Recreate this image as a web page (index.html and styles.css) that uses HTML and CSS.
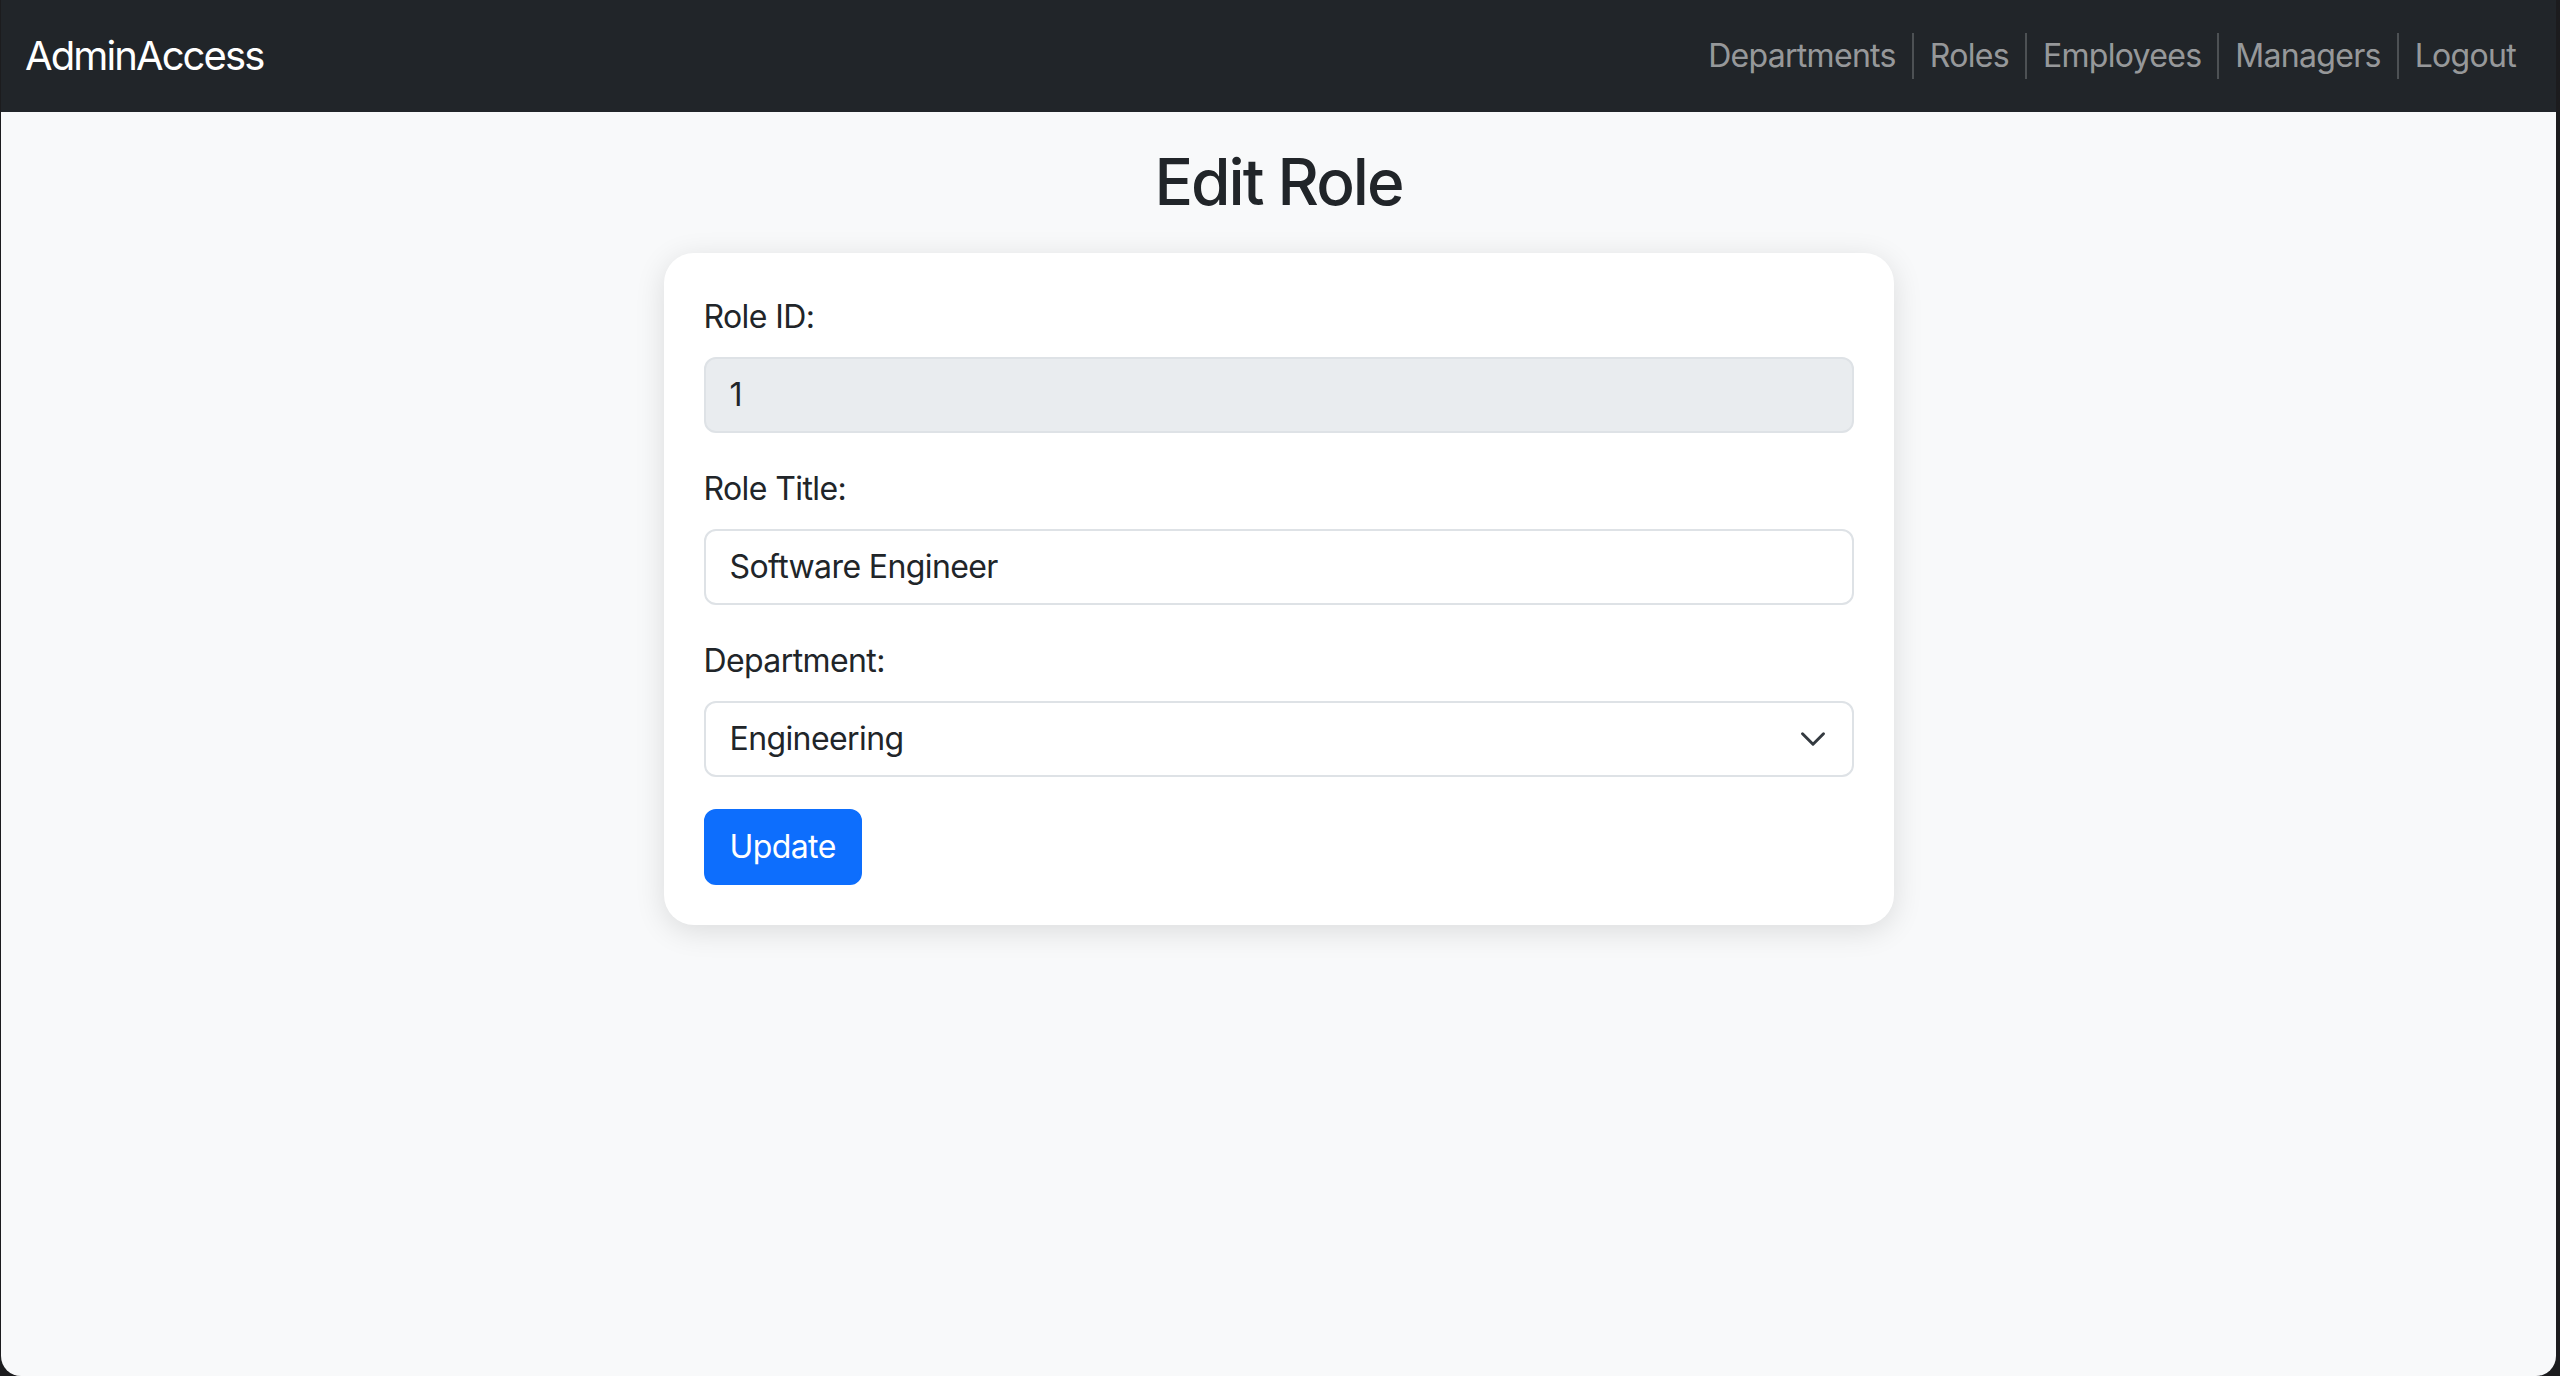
FILE: index.html
```html
<!DOCTYPE html>
<html lang="en">
<head>
<meta charset="utf-8">
<title>Edit Role</title>
<link rel="stylesheet" href="styles.css">
</head>
<body>
<div class="window">
  <nav class="navbar">
    <a class="brand" href="#">AdminAccess</a>
    <ul class="nav">
      <li><a class="nav-link" href="#">Departments</a></li>
      <li><a class="nav-link" href="#">Roles</a></li>
      <li><a class="nav-link" href="#">Employees</a></li>
      <li><a class="nav-link" href="#">Managers</a></li>
      <li><a class="nav-link" href="#">Logout</a></li>
    </ul>
  </nav>
  <main class="main">
    <h2 class="title">Edit Role</h2>
    <form class="card">
      <div class="group">
        <label class="label" for="rid">Role ID:</label>
        <input class="control" id="rid" type="text" value="1" disabled>
      </div>
      <div class="group">
        <label class="label" for="rtitle">Role Title:</label>
        <input class="control" id="rtitle" type="text" value="Software Engineer">
      </div>
      <div class="group">
        <label class="label" for="dept">Department:</label>
        <div class="select-wrap">
          <select class="control select" id="dept">
            <option>Engineering</option>
          </select>
          <svg class="chevron" viewBox="0 0 16 16" width="28" height="28" aria-hidden="true"><path d="m2 5 6 6 6-6" fill="none" stroke="#343a40" stroke-width="1.7" stroke-linecap="round" stroke-linejoin="round"/></svg>
        </div>
      </div>
      <button class="btn" type="button">Update</button>
    </form>
  </main>
</div>
</body>
</html>
```

FILE: styles.css
```css
html, body {
  margin: 0;
  padding: 0;
}
body {
  background: #1c1c1e;
  font-family: Inter, "Noto Sans", "Liberation Sans", sans-serif;
  color: #212529;
  height: 1376px;
  overflow: hidden;
}
.window {
  margin-left: 1px;
  width: 2555px;
  height: 1376px;
  background: #f8f9fa;
  border-radius: 0 0 20px 20px;
  overflow: hidden;
}
.navbar {
  height: 112px;
  background: #212529;
  display: flex;
  align-items: center;
  justify-content: space-between;
  padding: 0 24px;
  box-sizing: border-box;
}
.brand {
  color: #fff;
  font-size: 40px;
  line-height: 1.5;
  letter-spacing: -1.9px;
  text-decoration: none;
}
.nav {
  list-style: none;
  margin: 0;
  padding: 0;
  display: flex;
  align-items: center;
}
.nav li {
  display: flex;
  align-items: center;
}
.nav li + li {
  border-left: 2px solid #4d5154;
  height: 46px;
}
.nav-link {
  color: rgba(255, 255, 255, 0.55);
  font-size: 32px;
  line-height: 48px;
  letter-spacing: -0.7px;
  padding: 0 16px;
  text-decoration: none;
}
.main {
  padding-top: 32px;
}
.title {
  margin: 0 0 32px;
  text-align: center;
  font-size: 64px;
  font-weight: 500;
  line-height: 1.2;
  letter-spacing: -2px;
}
.card {
  width: 1230px;
  margin: 0 auto;
  box-sizing: border-box;
  padding: 40px;
  background: #fff;
  border-radius: 30px;
  box-shadow: 0 6px 30px rgba(0, 0, 0, 0.12);
}
.group {
  margin-bottom: 32px;
}
.label {
  display: block;
  margin-bottom: 16px;
  font-size: 32px;
  line-height: 48px;
  letter-spacing: -0.6px;
}
.control {
  display: block;
  width: 100%;
  box-sizing: border-box;
  height: 76px;
  padding: 12px 24px;
  font-family: inherit;
  font-size: 32px;
  line-height: 48px;
  letter-spacing: -0.6px;
  color: #212529;
  background: #fff;
  border: 2px solid #dee2e6;
  border-radius: 12px;
  outline: none;
}
.control:disabled {
  background: #e9ecef;
  opacity: 1;
}
.select-wrap {
  position: relative;
}
.select {
  appearance: none;
  -webkit-appearance: none;
  padding-right: 72px;
}
.chevron {
  position: absolute;
  right: 27px;
  top: 24px;
  pointer-events: none;
}
.btn {
  display: inline-block;
  font-family: inherit;
  font-size: 32px;
  line-height: 48px;
  letter-spacing: -0.6px;
  padding: 12px 24px;
  color: #fff;
  background: #0d6efd;
  border: 2px solid #0d6efd;
  border-radius: 12px;
  cursor: pointer;
}
```
